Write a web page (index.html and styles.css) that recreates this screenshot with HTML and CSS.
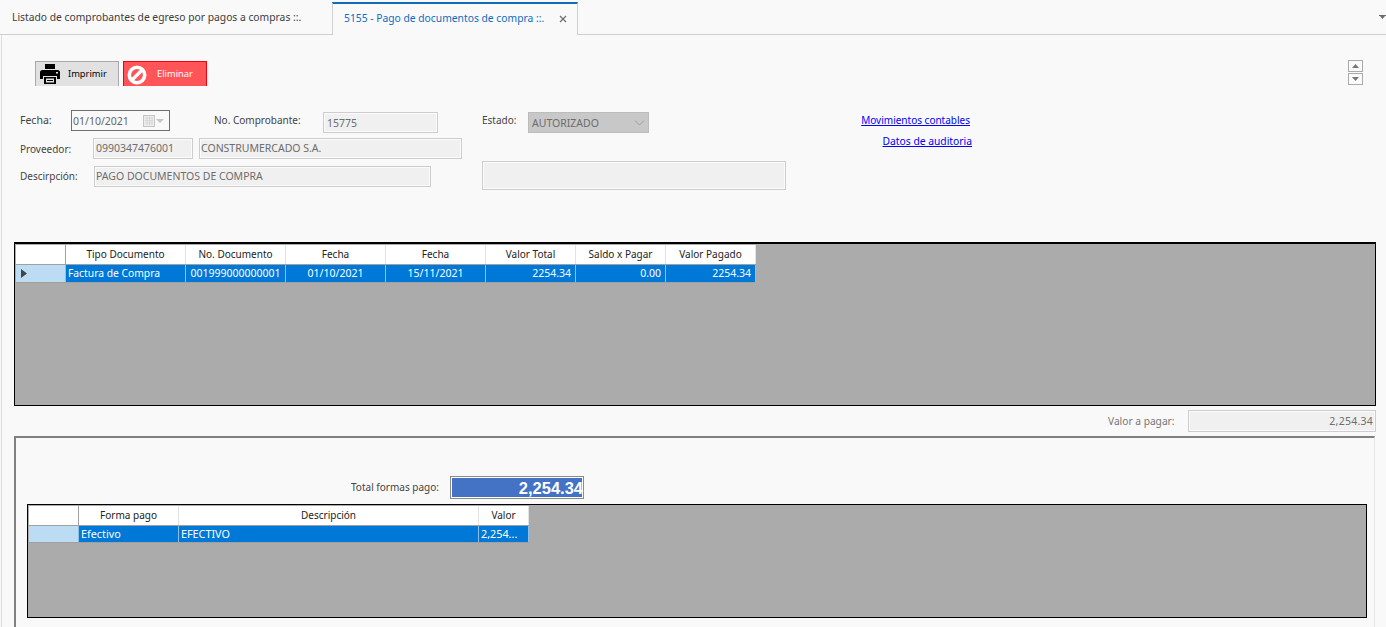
FILE: index.html
```html
<!DOCTYPE html>
<html lang="es">
<head>
<meta charset="utf-8">
<title>Pago de documentos de compra</title>
<link rel="stylesheet" href="styles.css">
</head>
<body>
<header class="tabs">
  <div class="tab">Listado de comprobantes de egreso por pagos a compras ::.</div>
  <div class="tab tab-active">
    <span>5155 - Pago de documentos de compra ::.</span>
    <svg class="tab-close" width="8" height="8" viewBox="0 0 8 8"><path d="M1 1l6 6M7 1L1 7" stroke="#6d6d6d" stroke-width="1.2" fill="none"/></svg>
  </div>
  <svg class="tab-menu" width="7" height="4" viewBox="0 0 7 4"><path d="M0 0h7v1H6L3.5 4 1 1H0z" fill="#6d6d6d"/></svg>
</header>

<main class="content">
  <div class="toolbar">
    <div class="actions">
      <button class="btn btn-print">
        <svg width="20" height="20" viewBox="0 0 20 20"><path d="M5 0h10v5H5zM2.5 6h15A2.5 2.5 0 0 1 20 8.500V15h-3v-3H3v3H0V8.500A2.500 2.500 0 0 1 2.500 6z" fill="#000"/><path d="M4 13h12v7H4z" fill="#000"/><path d="M6 14.500h8v4H6z" fill="#e1e1e1"/><path d="M7 16h6v1H7z" fill="#000"/><path d="M16 8h2v1.500h-2z" fill="#e1e1e1"/></svg>
        <span>Imprimir</span>
      </button>
      <button class="btn btn-delete">
        <svg width="20" height="20" viewBox="0 0 20 20"><circle cx="10" cy="10" r="7.700" fill="none" stroke="#fff" stroke-width="3.600"/><path d="M5 15L15 5" stroke="#fff" stroke-width="3.400"/></svg>
        <span>Eliminar</span>
      </button>
    </div>
    <div class="scrollers">
      <div class="scroller"><svg width="7" height="4" viewBox="0 0 7 4"><path d="M3.500 0L7 4H0z" fill="#777"/></svg></div>
      <div class="scroller"><svg width="7" height="4" viewBox="0 0 7 4"><path d="M0 0h7L3.500 4z" fill="#777"/></svg></div>
    </div>
  </div>

  <section class="form">
    <div class="fields">
      <div class="frow frow-1">
        <label class="lbl lbl-fecha">Fecha:</label>
        <div class="date">
          <span>01/10/2021</span>
          <svg class="date-cal" width="12" height="12" viewBox="0 0 12 12"><rect x="0.500" y="0.500" width="11" height="11" fill="#ececec" stroke="#c4c4c4"/><path d="M2 3h8M2 5.500h8M2 8h8M4 2v8M6.500 2v8M9 2v8" stroke="#d8d8d8" stroke-width="1"/></svg>
          <svg class="date-arrow" width="8" height="4" viewBox="0 0 8 4"><path d="M0 0h8L4 4z" fill="#c4c4c4"/></svg>
        </div>
        <label class="lbl lbl-comp">No. Comprobante:</label>
        <div class="input w-comp input-pad">15775</div>
      </div>
      <div class="frow frow-2">
        <label class="lbl lbl-prov">Proveedor:</label>
        <div class="input w-ruc">0990347476001</div>
        <div class="input w-name">CONSTRUMERCADO S.A.</div>
      </div>
      <div class="frow frow-3">
        <label class="lbl lbl-desc">Descirpción:</label>
        <div class="input w-desc">PAGO DOCUMENTOS DE COMPRA</div>
      </div>
    </div>
    <div class="status">
      <div class="status-row">
        <label class="lbl lbl-estado">Estado:</label>
        <div class="select">
          <span>AUTORIZADO</span>
          <svg width="11" height="6" viewBox="0 0 11 6"><path d="M1 0.500l4.500 4.500L10 0.500" fill="none" stroke="#9c9c9c"/></svg>
        </div>
      </div>
      <div class="input textarea"></div>
    </div>
    <nav class="links">
      <a class="link link-mov" href="#">Movimientos contables</a>
      <a class="link link-dat" href="#">Datos de auditoria</a>
    </nav>
  </section>

  <section class="dgrid dgrid-top">
    <div class="drow drow-head cols-top">
      <div class="dcell corner"></div>
      <div class="dcell">Tipo Documento</div>
      <div class="dcell">No. Documento</div>
      <div class="dcell">Fecha</div>
      <div class="dcell">Fecha</div>
      <div class="dcell">Valor Total</div>
      <div class="dcell">Saldo x Pagar</div>
      <div class="dcell">Valor Pagado</div>
    </div>
    <div class="drow drow-sel cols-top">
      <div class="dcell rowhead"><svg width="6" height="9" viewBox="0 0 6 9"><path d="M0 0l6 4.500L0 9z" fill="#444"/></svg></div>
      <div class="dcell left">Factura de Compra</div>
      <div class="dcell">001999000000001</div>
      <div class="dcell">01/10/2021</div>
      <div class="dcell">15/11/2021</div>
      <div class="dcell right">2254.34</div>
      <div class="dcell right">0.00</div>
      <div class="dcell right">2254.34</div>
    </div>
  </section>

  <div class="pay-row">
    <label class="lbl lbl-valor">Valor a pagar:</label>
    <div class="input w-valor">2,254.34</div>
  </div>

  <section class="panel">
    <div class="total-row">
      <label class="lbl lbl-total">Total formas pago:</label>
      <div class="total">2,254.34</div>
    </div>
    <div class="dgrid dgrid-bottom">
      <div class="drow drow-head cols-bottom">
        <div class="dcell corner"></div>
        <div class="dcell">Forma pago</div>
        <div class="dcell">Descripción</div>
        <div class="dcell">Valor</div>
      </div>
      <div class="drow drow-sel cols-bottom">
        <div class="dcell rowhead"></div>
        <div class="dcell left">Efectivo</div>
        <div class="dcell left">EFECTIVO</div>
        <div class="dcell left">2,254...</div>
      </div>
    </div>
  </section>
</main>
</body>
</html>
```

FILE: styles.css
```css
* { box-sizing: border-box; }
html, body { margin: 0; height: 627px; overflow: hidden; }
body {
  width: 1386px;
  background: #f9f9f9;
  color: #333;
  font: 10.5px/14px "Noto Sans", "DejaVu Sans", sans-serif;
}

.tabs {
  display: flex;
  align-items: flex-start;
  height: 35px;
  border-bottom: 1px solid #cfcfcf;
  font-size: 10.3px;
}
.tab {
  width: 332px;
  height: 34px;
  padding: 10px 0 0 12px;
  color: #3c3c3c;
}
.tab-active {
  width: 246px;
  height: 33px;
  margin-top: 2px;
  padding: 7px 0 0 11px;
  display: flex;
  justify-content: space-between;
  background: #f9f9f9;
  border: 1px solid #cfcfcf;
  border-top: 2px solid #0f6cbd;
  border-bottom: 0;
  color: #0f6cbd;
}
.tab-close { margin: 4px 10px 0 0; }
.tab-menu { margin: 15px 0 0 801px; }

.content {
  margin-left: 1px;
  border-left: 1px solid #dcdcdc;
  height: 592px;
  overflow: hidden;
  padding: 26px 0 0 12px;
}

.toolbar {
  display: flex;
  justify-content: space-between;
  height: 25px;
  padding: 0 23px 0 21px;
}
.actions { display: flex; gap: 4px; }
.btn {
  display: flex;
  align-items: center;
  width: 84px;
  height: 25px;
  padding: 0 0 0 4px;
  border: 1px solid #a9a9a9;
  border-bottom: 0;
  background: #e1e1e1;
  color: #000;
  font: 9.3px/14px "Noto Sans", "DejaVu Sans", sans-serif;
}
.btn span { margin-left: 8px; }
.btn-delete { background: #ff5558; border-color: #f5000b; color: #fff; padding-left: 3px; }
.btn-delete span { margin-left: 10px; }
.btn-delete svg { margin-top: 1px; }
.scrollers { display: flex; flex-direction: column; gap: 1px; margin-top: -1px; }
.scroller {
  width: 15px;
  height: 12px;
  border: 1px solid #aaa;
  display: flex;
  align-items: center;
  justify-content: center;
  background: #fafafa;
}

.form {
  display: flex;
  height: 132px;
  margin-top: 24px;
}
.fields { width: 468px; }
.frow { display: flex; }
.lbl { color: #444; white-space: nowrap; font-size: 10px; }
.frow-2 { margin-top: 5px; }
.frow-3 { margin-top: 7px; }
.lbl-fecha { width: 57px; padding: 3px 0 0 6px; font-size: 10.5px; }
.lbl-comp { width: 109px; margin-left: 44px; padding-top: 3px; }
.lbl-prov { width: 79px; padding: 4px 0 0 6px; }
.lbl-desc { width: 80px; padding: 3px 0 0 6px; }

.date {
  display: flex;
  align-items: center;
  width: 99px;
  height: 21px;
  padding-left: 1px;
  border: 1px solid #707070;
  background: #f9f9f9;
  color: #666;
}
.date span { width: 70px; }
.date-arrow { margin-left: 1px; }

.input {
  height: 21px;
  padding: 0 1px;
  border: 1px solid #cdcdcd;
  box-shadow: inset 0 0 0 1px #fbfbfb;
  background: #f0f0f0;
  color: #6d6d6d;
  line-height: 18px;
  white-space: nowrap;
}
.input-pad { padding: 1px 0 0 3px; margin-top: 2px; }
.w-comp { width: 115px; }
.w-ruc { width: 100px; padding-left: 2px; }
.w-name { width: 263px; margin-left: 6px; }
.w-desc { width: 337px; }

.status { width: 380px; }
.status-row { display: flex; margin-top: 2px; }
.lbl-estado { width: 46px; padding-top: 1px; }
.select {
  display: flex;
  align-items: center;
  justify-content: space-between;
  width: 121px;
  height: 21px;
  padding: 1px 3px 0 3px;
  border: 1px solid #bcbcbc;
  background: #c8c8c8;
  color: #6d6d6d;
}
.textarea { width: 304px; height: 29px; margin-top: 28px; }

.links { display: flex; flex-direction: column; align-items: flex-end; width: 110px; font-size: 10.3px; }
.link { color: #0000ff; text-decoration: underline; white-space: nowrap; }
.link-mov { margin: 3px 2px 0 0; font-size: 10px; }
.link-dat { margin-top: 7px; }

.dgrid {
  border: 1px solid #000;
  background: #ababab;
}
.dgrid-top {
  width: 1362px;
  height: 164px;
  padding: 1px 0 0 1px;
  border-top-width: 2px;
}
.drow { display: grid; }
.cols-top { grid-template-columns: 50px 120px 100px 100px 100px 90px 90px 90px; }
.cols-bottom { grid-template-columns: 50px 100px 300px 50px; }
.dcell { text-align: center; overflow: hidden; white-space: nowrap; }
.drow-head { width: max-content; height: 20px; background: #fff; border-bottom: 1px solid #a0a0a0; color: #222; line-height: 19px; font-size: 10px; }
.drow-head .dcell { border-right: 1px solid #e3e3e3; }
.drow-head .dcell:first-child { border-right-color: #a0a0a0; }
.drow-sel { width: max-content; height: 18px; background: #0078d7; color: #fff; line-height: 17px; border-bottom: 1px solid #a0a0a0; }
.drow-sel .dcell { border-right: 1px solid #8fbfe6; }
.rowhead { display: flex; align-items: center; padding-left: 5px; background: #bcdcf4; }
.left { text-align: left; padding-left: 2px; font-size: 10.3px; }
.right { text-align: right; padding-right: 4px; }

.pay-row {
  display: flex;
  align-items: flex-start;
  height: 26px;
  margin-top: 4px;
  padding-left: 1094px;
}
.lbl-valor { width: 80px; padding-top: 4px; color: #777; font-size: 10.2px; }
.w-valor { width: 188px; height: 22px; text-align: right; line-height: 20px; padding-right: 2px; letter-spacing: 0.25px; }

.panel {
  width: 1361px;
  height: 191px;
  border-right: 1px solid #e6e6e6;
  border-top: 2px solid #808080;
  border-left: 2px solid #808080;
  padding: 38px 0 0 11px;
}
.total-row { display: flex; height: 28px; align-items: flex-start; padding-left: 324px; }
.lbl-total { width: 99px; padding-top: 4px; }
.total {
  width: 134px;
  height: 23px;
  border: 1px solid #8a8a8a;
  box-shadow: inset 0 0 0 1px #fff;
  background: #4472c4;
  color: #fff;
  font: bold 16.5px/22px "Liberation Sans", Arial, sans-serif;
  text-align: right;
}
.dgrid-bottom {
  width: 1340px;
  height: 114px;
  padding: 1px 0 0 1px;
}
.dgrid-bottom .drow-sel { height: 17px; line-height: 16px; }
.dgrid-bottom .left { font-size: 10.8px; }
```
